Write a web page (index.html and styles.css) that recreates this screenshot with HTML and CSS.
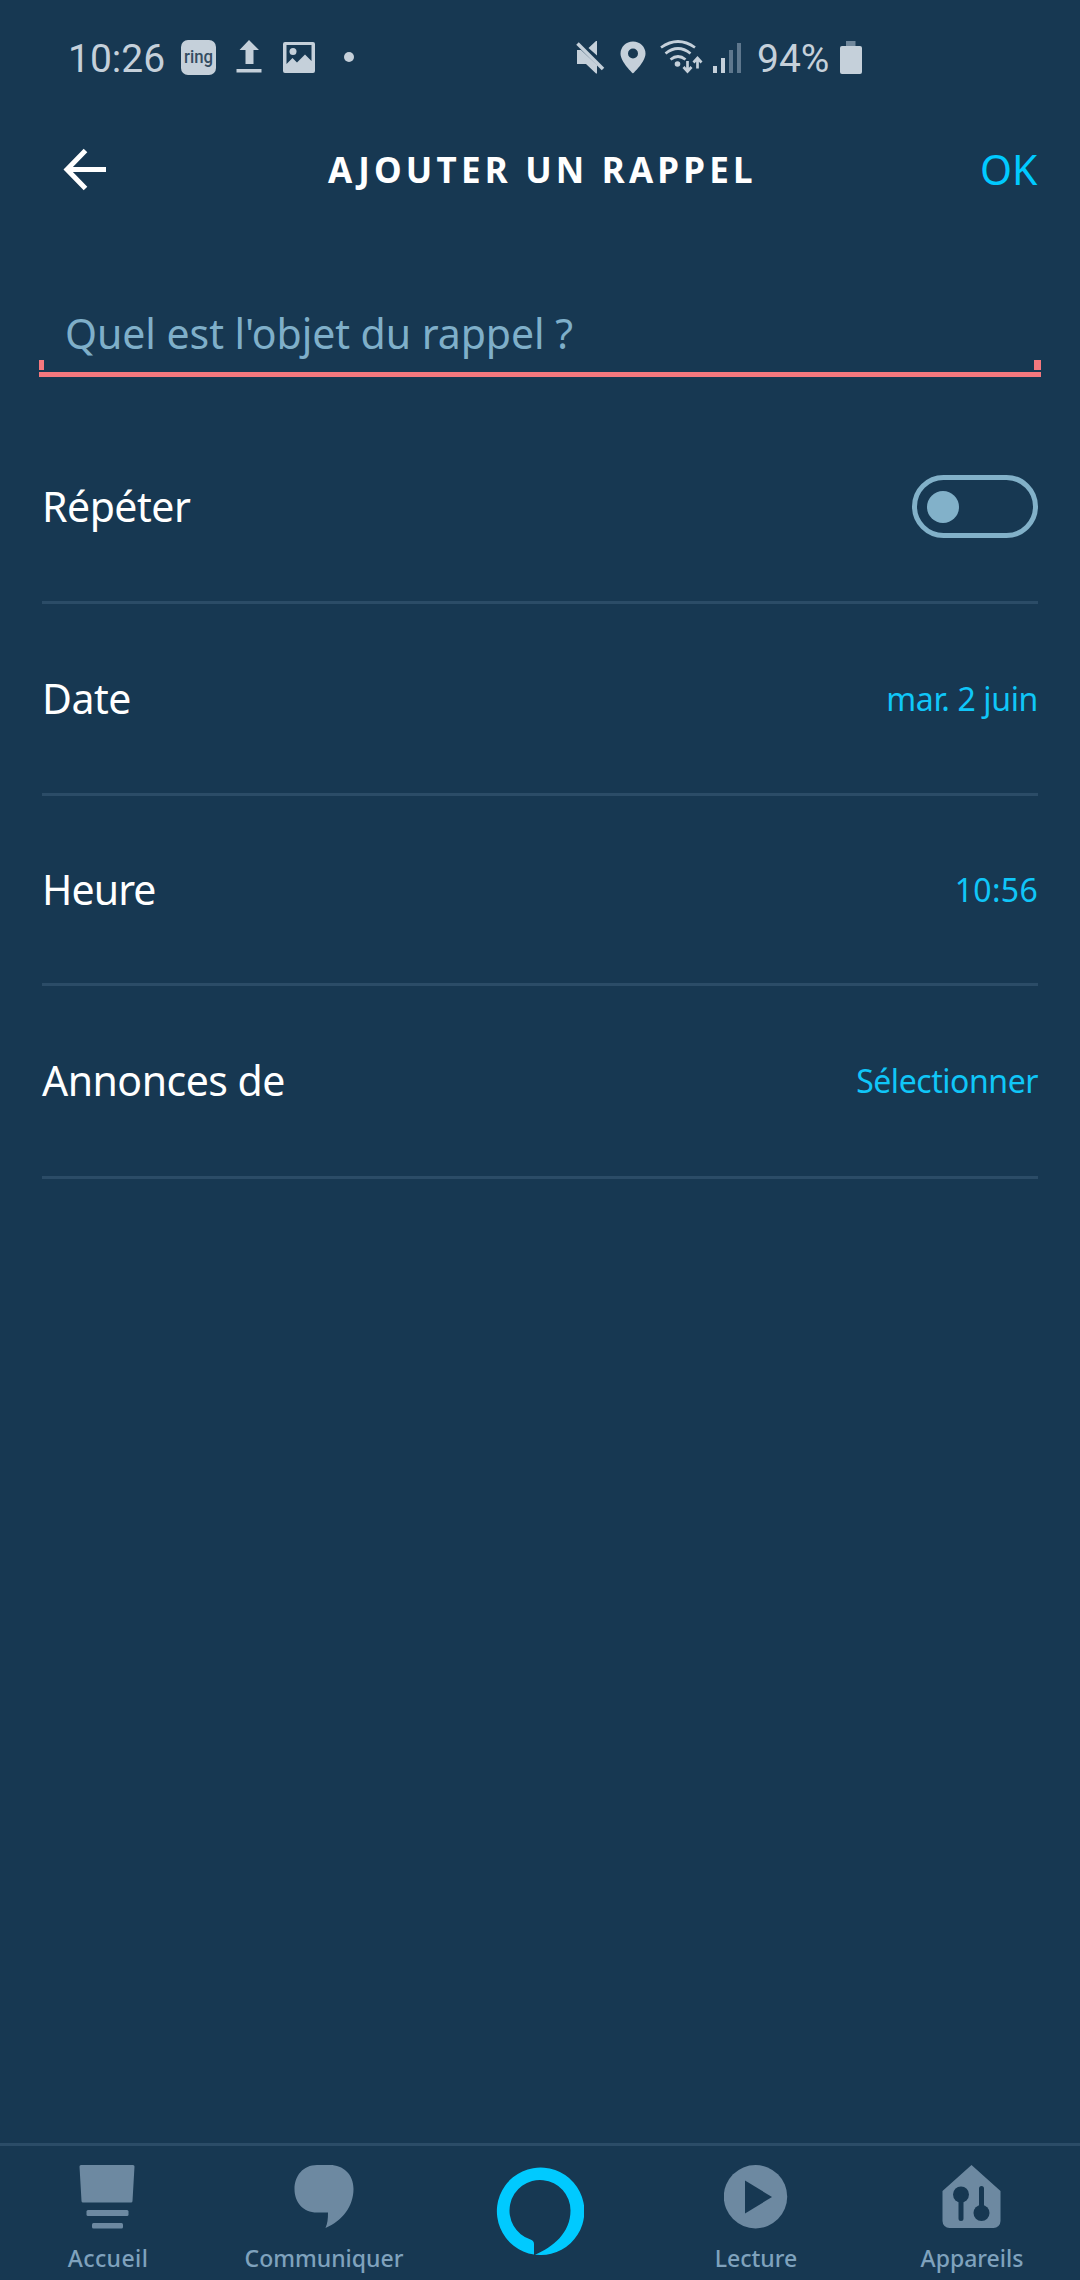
FILE: index.html
```html
<!DOCTYPE html>
<html lang="fr">
<head>
  <meta charset="UTF-8">
  <meta name="viewport" content="width=device-width, initial-scale=1.0">
  <title>Ajouter un rappel</title>
  <link rel="stylesheet" href="styles.css">
</head>
<body>
  <div class="screen">
    <div class="status-bar">
      <div class="status-left">
        <span class="clock">10:26</span>
        <svg class="ring-badge" width="35" height="35" viewBox="0 0 35 35">
          <rect width="35" height="35" rx="7" fill="#c5d0da"/>
          <text x="3" y="22.500" textLength="29" lengthAdjust="spacingAndGlyphs">ring</text>
        </svg>
        <svg class="upload" width="26" height="34" viewBox="0 0 26 34" fill="#c5d0da">
          <path d="M13 0l10 10h-5.500v14h-8V10H3.500z"/>
          <rect x="0.500" y="29" width="25" height="3.500"/>
        </svg>
        <svg class="picture" width="32" height="31" viewBox="0 0 32 31" fill="#c5d0da">
          <path fill-rule="evenodd" d="M2 0h28a2 2 0 0 1 2 2v27a2 2 0 0 1-2 2H2a2 2 0 0 1-2-2V2a2 2 0 0 1 2-2zM3.500 3v19l6-6 4.500 4.500 8-8L28.500 19V3z"/>
          <circle cx="10" cy="9.500" r="3.500"/>
        </svg>
        <span class="dot"></span>
      </div>
      <div class="status-right">
        <svg class="mute" width="30" height="34" viewBox="0 0 30 34">
          <path d="M1 10h4l16 15v8.500h-1L10 24H1zM12.500 8L20 1h1v14.500z" fill="#c5d0da"/>
          <path d="M1.500 3.500l25.500 25.500" stroke="#c5d0da" stroke-width="3.500"/>
        </svg>
        <svg class="pin" width="26" height="33" viewBox="0 0 26 33">
          <path fill="#c5d0da" fill-rule="evenodd" d="M13 .5C6 .5.500 6 .5 12.500.500 21 13 32.500 13 32.500S25.500 21 25.500 12.500C25.500 6 20 .5 13 .5zM13 7.500a5 5 0 1 1 0 10 5 5 0 0 1 0-10z"/>
        </svg>
        <svg class="wifi" width="43" height="34" viewBox="0 0 43 34" fill="none" stroke="#c5d0da" stroke-width="2.700">
          <path d="M1 7.500Q18-4.500 35 7.500M5.500 13.500q12.500-10 25 0M10.500 19.500q7.500-6 15 0"/>
          <circle cx="17.500" cy="24" r="2.800" fill="#c5d0da" stroke="none"/>
          <path d="M27.500 21v10M23.500 27l4 4.500 4-4.500M37.500 28.500V19M33.500 22.500l4-4.500 4 4.500"/>
        </svg>
        <svg class="signal" width="28" height="31" viewBox="0 0 28 31" fill="#c5d0da">
          <rect x="0" y="24" width="4" height="7"/>
          <rect x="8" y="16" width="4" height="15"/>
          <rect x="16" y="8" width="4" height="23" fill="#5e778d"/>
          <rect x="24" y="1" width="4" height="30" fill="#5e778d"/>
        </svg>
        <span class="battery-level">94%</span>
        <svg class="battery" width="22" height="33" viewBox="0 0 22 33">
          <rect x="6" y="0" width="9.500" height="6" fill="#71889c"/>
          <rect x="0" y="5" width="22" height="28" rx="2" fill="#c5d0da"/>
        </svg>
      </div>
    </div>

    <header class="header">
      <svg class="back" width="44" height="44" viewBox="0 0 44 44" fill="none" stroke="#fff" stroke-width="5">
        <path d="M22.500 2.500L4 21.500l18.500 19M3.500 21.500h39.500"/>
      </svg>
      <h1>AJOUTER UN RAPPEL</h1>
      <a class="ok">OK</a>
    </header>

    <div class="field">
      <span class="placeholder">Quel est l'objet du rappel ?</span>
      <div class="field-ends"></div>
    </div>

    <main class="rows">
      <div class="row">
        <span class="label">Répéter</span>
        <div class="toggle"><div class="knob"></div></div>
      </div>
      <div class="row">
        <span class="label">Date</span>
        <span class="value value-date">mar. 2 juin</span>
      </div>
      <div class="row">
        <span class="label label-hour">Heure</span>
        <span class="value value-hour">10:56</span>
      </div>
      <div class="row">
        <span class="label">Annonces de</span>
        <span class="value value-select">Sélectionner</span>
      </div>
    </main>

    <nav class="tabs">
      <div class="tab">
        <svg width="64" height="64" viewBox="0 0 64 64" fill="#6d89a1">
          <path d="M5 0h52a1.500 1.500 0 0 1 1.500 1.500L56.500 36a1.500 1.500 0 0 1-1.500 1.500H7A1.500 1.500 0 0 1 5.500 36l-2-34.500A1.500 1.500 0 0 1 5 0z"/>
          <rect x="10.500" y="45" width="42" height="6" rx="1.500"/>
          <rect x="16" y="58" width="31" height="5.500" rx="1.500"/>
        </svg>
        <span class="tab-home">Accueil</span>
      </div>
      <div class="tab">
        <svg width="64" height="64" viewBox="0 0 64 64" fill="#6d89a1">
          <path d="M25 0h13c13 0 23.500 9 23.500 24 0 17-11 32-28 39 2-4.500 2.500-9 2.500-15.500H25C11 47.500 2.500 37 2.500 24S11 0 25 0z"/>
        </svg>
        <span>Communiquer</span>
      </div>
      <div class="tab tab-alexa">
        <svg width="88" height="88" viewBox="0 0 88 88" fill="#00caff">
          <path d="M38 87.500A43.750 43.750 0 1 1 44 88L39 87.700C57 80 74.500 66 74.500 43.500A30.500 30.500 0 1 0 34.500 72.500Q38 73.500 38 77z"/>
        </svg>
      </div>
      <div class="tab">
        <svg width="64" height="64" viewBox="0 0 64 64">
          <circle cx="31.500" cy="31.700" r="31.700" fill="#6d89a1"/>
          <path d="M21 15.500v33L48 32z" fill="#173852"/>
        </svg>
        <span>Lecture</span>
      </div>
      <div class="tab">
        <svg width="64" height="64" viewBox="0 0 64 64">
          <path d="M31.500 0L60.500 26v30a7 7 0 0 1-7 7h-44a7 7 0 0 1-7-7V26z" fill="#6d89a1"/>
          <g fill="#173852" stroke="#173852" stroke-width="5" stroke-linecap="round">
            <circle cx="21" cy="29.500" r="8" stroke="none"/>
            <path d="M21 30v23.500M41.500 23.500V48"/>
            <circle cx="41.500" cy="48" r="8" stroke="none"/>
          </g>
        </svg>
        <span>Appareils</span>
      </div>
    </nav>
  </div>
</body>
</html>
```
FILE: styles.css
```css
body {
  margin: 0;
  background-color: #173852;
  font-family: 'Noto Sans', sans-serif;
  color: #ffffff;
}

.screen {
  width: 1080px;
  height: 2280px;
  display: flex;
  flex-direction: column;
  overflow: hidden;
}

svg {
  display: block;
  flex: none;
}

/* Status bar */
.status-bar {
  height: 114px;
  display: flex;
  justify-content: space-between;
  box-sizing: border-box;
  padding: 0 218px 0 68px;
  color: #c5d0da;
  font-family: Roboto, sans-serif;
  font-size: 39px;
  line-height: 48px;
}

.status-left, .status-right {
  display: flex;
  align-items: center;
}

.clock {
  width: 113px;
  padding-top: 3px;
}

.ring-badge text {
  font-family: Roboto, sans-serif;
  font-size: 19px;
  font-weight: 500;
  fill: #344c61;
}

.upload {
  margin-left: 20px;
}

.picture {
  margin-left: 21px;
}

.dot {
  width: 10px;
  height: 10px;
  margin-left: 29px;
  border-radius: 50%;
  background-color: #c5d0da;
}

.pin {
  margin-left: 14px;
}

.wifi {
  margin-left: 14px;
}

.signal {
  margin-left: 10px;
}

.battery-level {
  width: 83px;
  margin-left: 16px;
  padding-top: 3px;
}

/* Header */
.header {
  height: 112px;
  display: flex;
  align-items: center;
  box-sizing: border-box;
  padding: 0 41px 0 63px;
}

.header h1 {
  margin: 0 0 0 221px;
  width: 652px;
  font-size: 35px;
  font-weight: 700;
  letter-spacing: 4.2px;
  line-height: 48px;
  white-space: nowrap;
}

.ok {
  padding-bottom: 2px;
  color: #00caff;
  font-size: 41px;
  line-height: 48px;
}

/* Text field */
.field {
  width: 1002px;
  height: 151px;
  margin-left: 39px;
  box-sizing: border-box;
  border-bottom: 5px solid #f5787e;
  display: flex;
  flex-direction: column;
  justify-content: flex-end;
}

.placeholder {
  margin: 0 0 1px 26px;
  color: #7fafc9;
  font-size: 41px;
  letter-spacing: -0.05px;
  line-height: 52px;
  white-space: nowrap;
}

.field-ends {
  height: 10px;
  margin-bottom: 2px;
  border-left: 5px solid #f5787e;
  border-right: 7px solid #f5787e;
}

/* Rows */
.rows {
  margin: 35px 42px 0;
}

.row {
  height: 192px;
  display: flex;
  align-items: center;
  justify-content: space-between;
  box-sizing: border-box;
  border-bottom: 3px solid #2b4c67;
}

.row:nth-child(3) {
  height: 190px;
}

.row:nth-child(4) {
  height: 193px;
}

.label {
  padding-bottom: 2px;
  font-size: 41px;
  line-height: 56px;
  letter-spacing: -0.5px;
}

.label-hour {
  letter-spacing: -0.9px;
}

.value {
  color: #10c6f8;
  font-size: 32px;
  line-height: 44px;
}

.value-date {
  letter-spacing: -0.35px;
}

.value-hour {
  letter-spacing: 0.3px;
}

.value-select {
  letter-spacing: -0.45px;
}

.toggle {
  width: 126px;
  height: 63px;
  box-sizing: border-box;
  border: 5px solid #82b1c9;
  border-radius: 32px;
  padding: 11px 10px;
}

.knob {
  width: 32px;
  height: 32px;
  border-radius: 50%;
  background-color: #82b1c9;
}

/* Bottom navigation */
.tabs {
  height: 137px;
  margin-top: auto;
  display: flex;
  box-sizing: border-box;
  border-top: 3px solid #2b4c67;
}

.tab {
  width: 216px;
  display: flex;
  flex-direction: column;
  align-items: center;
  box-sizing: border-box;
  padding-top: 19px;
  color: #7fa2bd;
  font-size: 23px;
  font-weight: 500;
  line-height: 32px;
}

.tab span {
  margin-top: 13px;
}

.tab .tab-home {
  letter-spacing: 0.4px;
}

.tab-alexa {
  padding-top: 21px;
}
```
